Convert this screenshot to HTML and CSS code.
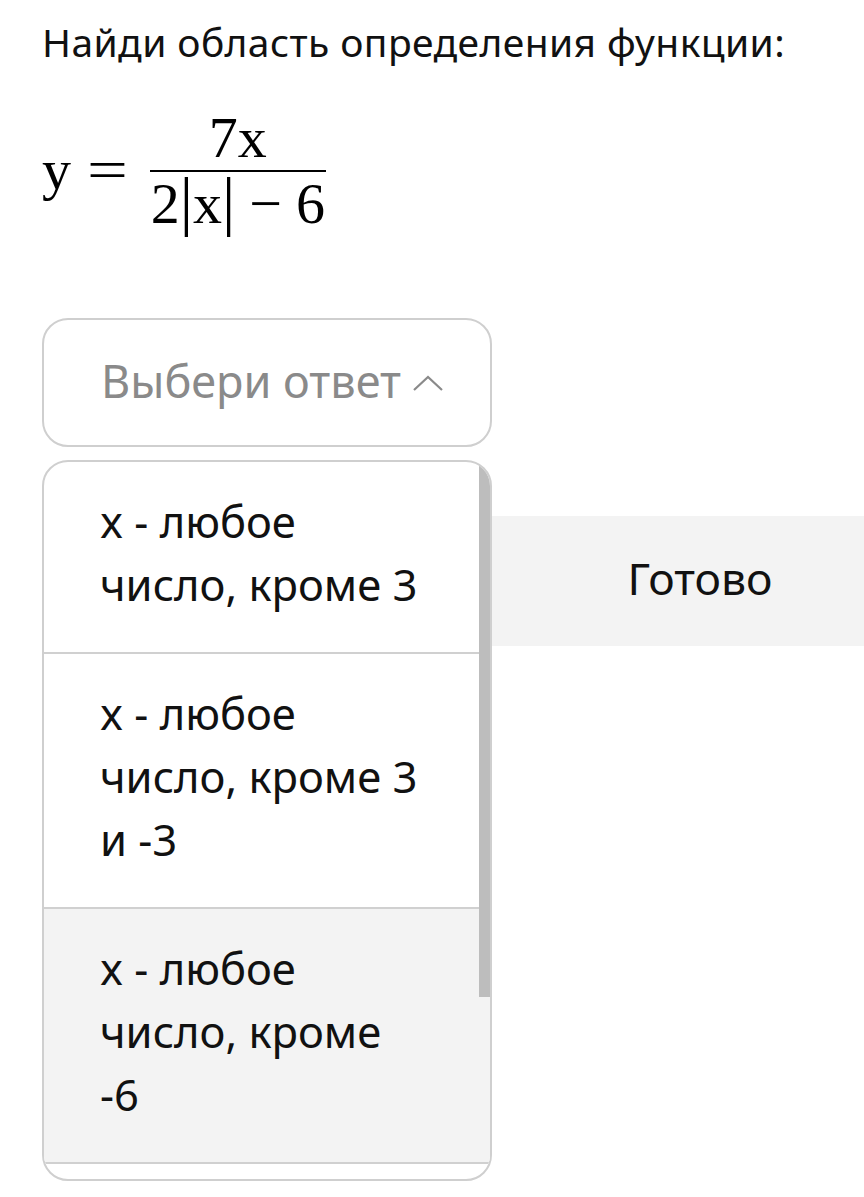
FILE: index.html
```html
<!DOCTYPE html>
<html lang="ru">
<head>
<meta charset="utf-8">
<link rel="stylesheet" href="styles.css">
</head>
<body>
<div class="page">
  <h1 class="question">Найди область определения функции:</h1>
  <div class="formula">
    <span class="var">y</span>
    <span class="eq">=</span>
    <span class="frac">
      <span class="num">7x</span>
      <span class="den">2<span class="bar">|</span>x<span class="bar">|</span><span class="minus">−</span>6</span>
    </span>
  </div>
  <div class="answer">
    <div class="select">
      <span class="placeholder">Выбери ответ</span>
      <svg class="chevron" width="32" height="18" viewBox="0 0 32 18"><path d="M2 16 L16 3 L30 16" fill="none" stroke="#8a8a8a" stroke-width="2.2"/></svg>
    </div>
    <div class="dropdown">
      <div class="options">
        <div class="option">x - любое<br>число, кроме 3</div>
        <div class="option">x - любое<br>число, кроме 3<br>и -3</div>
        <div class="option hover">x - любое<br>число, кроме<br>-6</div>
        <div class="option empty"></div>
      </div>
      <div class="thumb"></div>
    </div>
    <button class="done">Готово</button>
  </div>
</div>
</body>
</html>
```
FILE: styles.css
```css
html, body {
  margin: 0;
  padding: 0;
  background: #fff;
}
.page {
  box-sizing: border-box;
  width: 864px;
  height: 1197px;
  overflow: hidden;
  padding: 0 0 0 42px;
  font-family: "Noto Sans", "Open Sans", sans-serif;
  color: #111;
}
.question {
  margin: 0;
  padding-top: 17px;
  font-size: 39px;
  letter-spacing: 0.4px;
  font-weight: 400;
  line-height: 50px;
}
.formula {
  display: flex;
  align-items: center;
  margin-top: 32px;
  font-family: "Liberation Serif", "DejaVu Serif", serif;
  font-size: 58px;
  color: #000;
  height: 140px;
}
.var { margin-right: 20px; }
.eq { margin-right: 26px; transform: scaleX(1.25); }
.frac {
  display: inline-flex;
  flex-direction: column;
  align-items: center;
  margin-top: 4px;
}
.num {
  line-height: 60px;
  padding: 0 4px 2px;
}
.den {
  border-top: 2px solid #000;
  line-height: 60px;
  padding: 2px 1px 0;
}
.bar { font-size: 66px; line-height: 40px; }
.minus { margin: 0 14px; }
.answer {
  position: relative;
  margin-top: 79px;
}
.select {
  box-sizing: border-box;
  width: 450px;
  height: 129px;
  border: 2px solid #cfcfcf;
  border-radius: 26px;
  display: flex;
  align-items: center;
  padding-left: 57px;
  padding-bottom: 4px;
  gap: 11px;
}
.placeholder {
  font-size: 45px;
  color: #8a8a8a;
}
.chevron { margin-top: 4px; }
.dropdown {
  position: absolute;
  top: 142px;
  left: 0;
  box-sizing: border-box;
  width: 450px;
  height: 721px;
  border: 2px solid #cfcfcf;
  border-radius: 26px;
  overflow: hidden;
  background: #fff;
  z-index: 2;
}
.option {
  padding: 28px 20px 36px 56px;
  font-size: 43.5px;
  line-height: 63px;
  color: #111;
  border-bottom: 2px solid #d0d0d0;
}
.option.hover { background: #f3f3f3; }
.option.empty { height: 60px; padding: 0; border-bottom: none; }
.thumb {
  position: absolute;
  top: 0;
  right: 0;
  width: 11px;
  height: 535px;
  background: #bdbdbd;
}
.done {
  display: block;
  margin-top: 69px;
  width: 1316px;
  height: 130px;
  border: none;
  background: #f3f3f3;
  font-family: "Noto Sans", "Open Sans", sans-serif;
  font-size: 44.5px;
  color: #111;
  padding: 0 0 8px;
}
```
